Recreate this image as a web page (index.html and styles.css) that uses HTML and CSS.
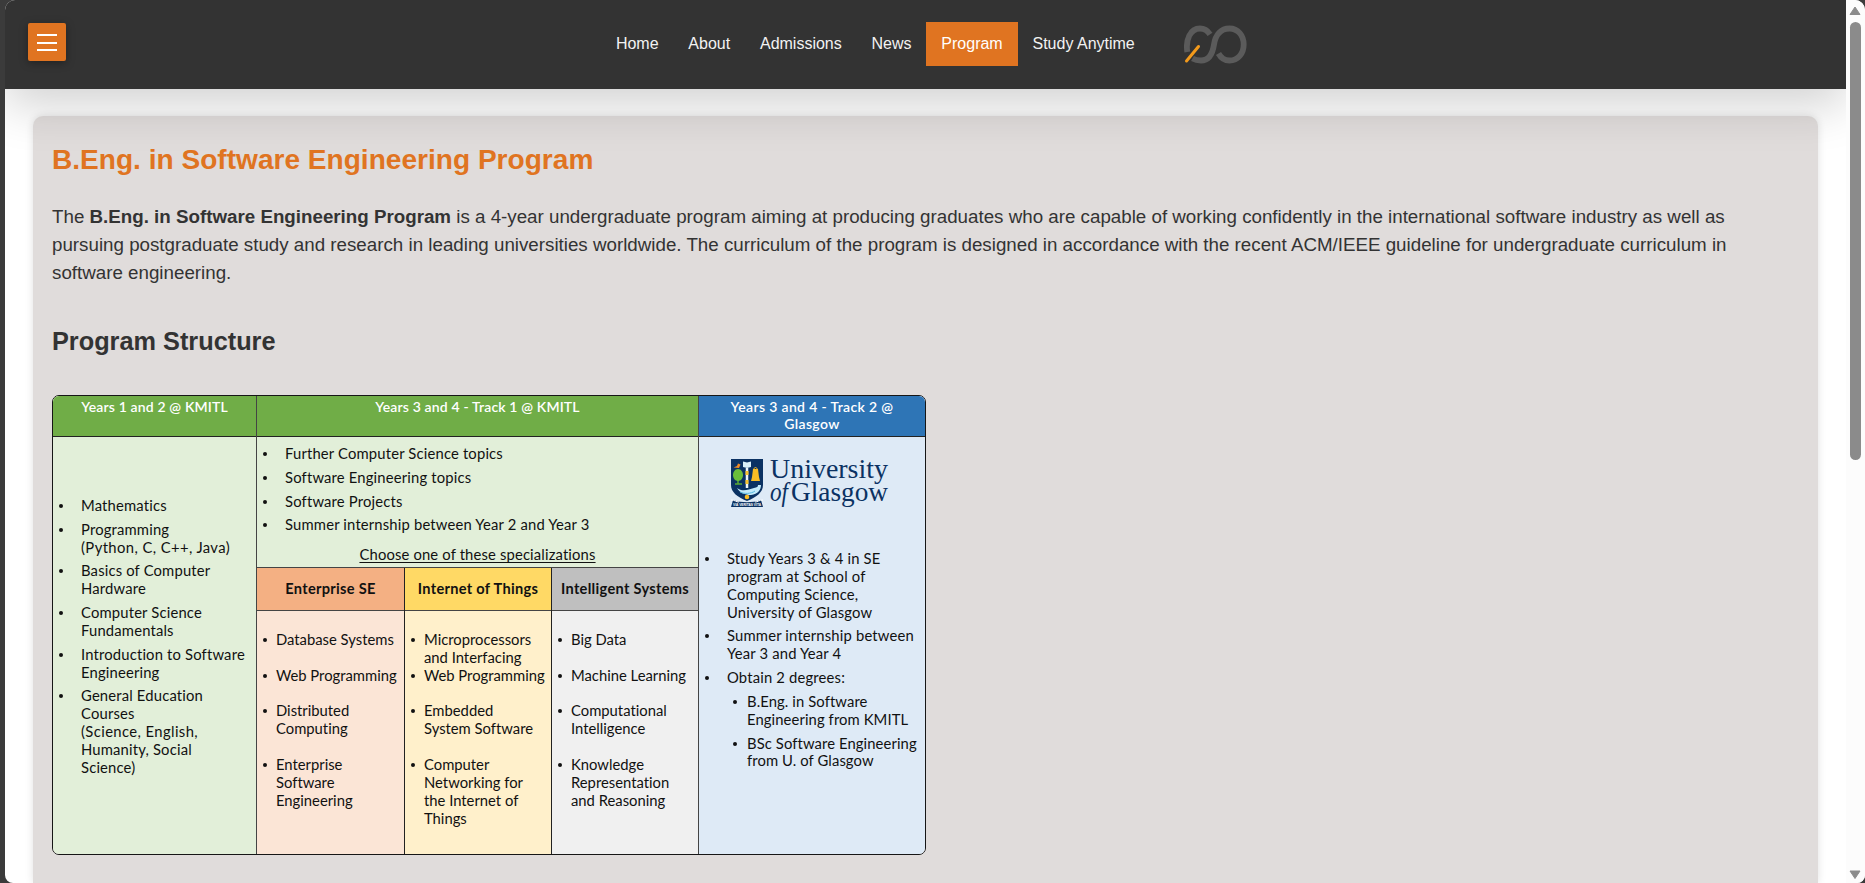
FILE: index.html
```html
<!DOCTYPE html>
<html lang="en">
<head>
<meta charset="utf-8">
<title>B.Eng. in Software Engineering Program</title>
<link rel="stylesheet" href="styles.css">
</head>
<body>
<div class="window">
  <div class="page">
    <header class="topbar">
      <button class="menu" aria-label="Menu"><span></span><span></span><span></span></button>
      <nav class="nav">
        <a>Home</a><a>About</a><a>Admissions</a><a>News</a><a class="active">Program</a><a>Study Anytime</a>
      </nav>
      <svg class="brand" viewBox="0 0 63 39" width="63" height="39" fill="none">
        <path d="M3.300 27C1.500 15 6 3.500 16 3.500c4.500 0 7.500 2 10 5.800" stroke="#5b5b5b" stroke-width="5.800"/>
        <path d="M8.500 33.500c3 1.700 5.500 2 8.500 2 7 0 11.500-6 13-16C31.500 9.500 37 3.500 45.500 3.500c8.500 0 14.200 7 14.200 16s-5.700 16-14.200 16c-5 0-8.500-2.500-11-7" stroke="#5b5b5b" stroke-width="5.800"/>
        <path d="M2.500 36 14.500 21.500" stroke="#f39a1b" stroke-width="3" stroke-linecap="round"/>
      </svg>
    </header>
    <main class="card">
      <h1>B.Eng. in Software Engineering Program</h1>
      <p class="intro">The <b>B.Eng. in Software Engineering Program</b> is a 4-year undergraduate program aiming at producing graduates who are capable of working confidently in the international software industry as well as<br>pursuing postgraduate study and research in leading universities worldwide. The curriculum of the program is designed in accordance with the recent ACM/IEEE guideline for undergraduate curriculum in<br>software engineering.</p>
      <h2>Program Structure</h2>
      <section class="structure">
        <div class="col years12">
          <div class="head green">Years 1 and 2 @ KMITL</div>
          <ul class="list wide first">
            <li>Mathematics</li>
            <li>Programming<br><span class="loose">(Python, C, C++, Java)</span></li>
            <li>Basics of Computer<br>Hardware</li>
            <li>Computer Science<br>Fundamentals</li>
            <li>Introduction to Software<br>Engineering</li>
            <li>General Education<br>Courses<br><span class="loose">(Science, English,</span><br>Humanity, Social<br>Science)</li>
          </ul>
        </div>
        <div class="col track1">
          <div class="head green">Years 3 and 4 - Track 1 @ KMITL</div>
          <div class="common">
            <ul class="list wide">
              <li>Further Computer Science topics</li>
              <li>Software Engineering topics</li>
              <li>Software Projects</li>
              <li>Summer internship between Year 2 and Year 3</li>
            </ul>
            <div class="choose">Choose one of these specializations</div>
          </div>
          <div class="specs">
            <div class="spec enterprise">
              <h3>Enterprise SE</h3>
              <ul class="list">
                <li>Database Systems</li>
                <li>Web Programming</li>
                <li>Distributed<br>Computing</li>
                <li>Enterprise<br>Software<br>Engineering</li>
              </ul>
            </div>
            <div class="spec iot">
              <h3>Internet of Things</h3>
              <ul class="list">
                <li class="tight">Microprocessors<br>and Interfacing</li>
                <li>Web Programming</li>
                <li>Embedded<br>System Software</li>
                <li>Computer<br>Networking for<br>the Internet of<br>Things</li>
              </ul>
            </div>
            <div class="spec intelligent">
              <h3>Intelligent Systems</h3>
              <ul class="list">
                <li>Big Data</li>
                <li>Machine Learning</li>
                <li>Computational<br>Intelligence</li>
                <li>Knowledge<br>Representation<br>and Reasoning</li>
              </ul>
            </div>
          </div>
        </div>
        <div class="col track2">
          <div class="head blue">Years 3 and 4 - Track 2 @<br>Glasgow</div>
          <svg class="glasgow" viewBox="0 0 160 52" width="160" height="52">
            <path d="M1 1h32v26c0 7-6 12-16 16C7 39 1 34 1 27z" fill="#0b3263"/>
            <path d="M3 42l-2 7h32l-2-7c-9 3-19 3-28 0z" fill="#0b3263"/>
            <path d="M1 42c4 0 5 2 8 2M33 42c-4 0-5 2-8 2" stroke="#fff" fill="none"/>
            <text x="3" y="48.300" class="motto" textLength="28" lengthAdjust="spacingAndGlyphs">VIA VERITAS VITA</text>
            <path d="M8 17v9M5 26h7" stroke="#5aaa35" stroke-width="1.500"/>
            <path d="M8 11c3 0 5 3 5 6s-2 6-5 6-5-3-5-6 2-6 5-6z" fill="#6abf3b"/>
            <path d="M3.500 9.500 7 8l1-2.500 2.500 1L9 10z" fill="#ef8a25"/>
            <path d="M13 3.500l4 1 4-1V9l-4 1-4-1z" fill="#d9f0fa"/>
            <path d="M17 10v20" stroke="#eef6fa" stroke-width="2.500"/>
            <path d="M17 13v4M17 22v4" stroke="#f9c32d" stroke-width="3"/>
            <path d="M23 11h5l1 8 1 4h-9l1-4z" fill="#f9bd25"/>
            <path d="M24 11c0-2 3-2 3 0" stroke="#f9bd25" fill="none"/>
            <path d="M7 30c5 4 11 2 17 0 3-1 4-1 4-3l3 0c0 5-3 9-10 10-6 0-11-2-14-7z" fill="#c3eafa"/>
            <path d="M10 34c4 2 11 2 15-1" stroke="#53b7df" fill="none"/>
            <circle cx="17" cy="39" r="2.300" fill="#f9bd25"/>
            <text x="40" y="20" class="uni" textLength="118" lengthAdjust="spacingAndGlyphs">University</text>
            <text x="40" y="42.500" class="uni of" textLength="18" lengthAdjust="spacingAndGlyphs">of</text>
            <text x="61" y="42.500" class="uni" textLength="97" lengthAdjust="spacingAndGlyphs">Glasgow</text>
          </svg>
          <ul class="list wide">
            <li>Study Years 3 &amp; 4 in SE<br>program at School of<br>Computing Science,<br>University of Glasgow</li>
            <li>Summer internship between<br>Year 3 and Year 4</li>
            <li>Obtain 2 degrees:
              <ul class="list nested">
                <li>B.Eng. in Software<br>Engineering from KMITL</li>
                <li>BSc Software Engineering<br>from U. of Glasgow</li>
              </ul>
            </li>
          </ul>
        </div>
      </section>
    </main>
  </div>
  <aside class="scrollbar">
    <svg width="12" height="10" viewBox="0 0 12 10"><path d="M6 1 11 8.500H1z" fill="#8b8b8b" stroke="#8b8b8b" stroke-linejoin="round"/></svg>
    <div class="thumb"></div>
    <svg class="down" width="12" height="10" viewBox="0 0 12 10"><path d="M6 8.500 11 1H1z" fill="#8b8b8b" stroke="#8b8b8b" stroke-linejoin="round"/></svg>
  </aside>
</div>
</body>
</html>
```

FILE: styles.css
```css
* { box-sizing: border-box; }
body {
  margin: 0;
  height: 883px;
  overflow: hidden;
  background: #3b3b3b;
  font-family: "Liberation Sans", Arial, sans-serif;
  color: #333;
}
.window {
  display: flex;
  height: 883px;
  margin-left: 5px;
  border-radius: 10px 10px 8px 8px;
  overflow: hidden;
  background: #fff;
}
.page { flex: 1; display: flex; flex-direction: column; overflow: hidden; }
.topbar {
  position: relative;
  z-index: 2;
  flex: none;
  height: 89px;
  display: flex;
  align-items: flex-start;
  background: #333;
  box-shadow: 0 16px 48px rgba(0, 0, 0, .18);
}
.menu {
  width: 38px;
  height: 38px;
  margin: 23px 0 0 23px;
  padding: 11px 9px 10px;
  border: 0;
  border-radius: 2px;
  background: #e07421;
  box-shadow: 0 2px 8px rgba(0, 0, 0, .35);
  display: flex;
  flex-direction: column;
  justify-content: space-between;
}
.menu span { height: 2px; background: #fff; }
.nav { display: flex; margin: 22px 0 0 535px; }
.nav a {
  padding: 0 14.9px;
  font-size: 16px;
  line-height: 43px;
  height: 44px;
  color: #f2f2f2;
  white-space: nowrap;
}
.nav .active { background: #e07421; color: #fff; }
.brand { margin: 25px 0 0 34px; }
.card {
  flex: 1 0 auto;
  margin: 27px 28px 0;
  padding: 28px 19px 0;
  border-radius: 10px 10px 0 0;
  background: #e0dcdb;
  box-shadow: 0 0 8px rgba(0, 0, 0, .12);
}
h1 { margin: 0; font-size: 28.08px; line-height: 31px; color: #e07421; }
.intro { margin: 28px 0 0; font-size: 18.76px; line-height: 28.1px; white-space: nowrap; }
h2 { margin: 38.7px 0 0; font-size: 25.3px; line-height: 30px; }
.structure {
  display: grid;
  grid-template-columns: 204px 442px 226px;
  width: 874px;
  height: 460px;
  margin-top: 39px;
  border: 1px solid #161616;
  border-radius: 7px;
  overflow: hidden;
  font-family: Lato, "Trebuchet MS", sans-serif;
  font-size: 14.8px;
  font-variant-ligatures: none;
  line-height: 17.87px;
  letter-spacing: .15px;
  color: #111;
  white-space: nowrap;
}
.col { display: flex; flex-direction: column; }
.years12 { background: #e2efd9; border-right: 1px solid #444; }
.track1 { background: #e2efd9; border-right: 1px solid #444; }
.track2 { background: #deeaf6; }
.head {
  flex: none;
  height: 41px;
  padding-top: 2px;
  border-bottom: 1px solid #222;
  text-align: center;
  font-weight: 600;
  font-size: 14px;
  line-height: 17px;
  color: #fff;
}
.green { background: #70ad47; }
.blue { background: #2e75b6; letter-spacing: .35px; }
.list { list-style: none; margin: 0; padding: 0; }
.list li { position: relative; padding-left: 19px; margin-bottom: 17.87px; }
.list li::before {
  content: "";
  position: absolute;
  left: 6px;
  top: 7px;
  width: 4px;
  height: 4px;
  border-radius: 50%;
  background: #111;
}
.list .tight { margin-bottom: 0; }
.wide > li, .nested > li { padding-left: 28px; margin-bottom: 5.9px; }
.first { margin-top: 60px; }
.loose { letter-spacing: .4px; }
.common { height: 131px; padding-top: 8px; border-bottom: 1px solid #444; }
.choose {
  margin-top: 12px;
  text-align: center;
  text-decoration: underline;
  text-underline-offset: 2px;
}
.specs { flex: 1; display: grid; grid-template-columns: 147px 147px 147px; }
.spec { letter-spacing: 0; }
.spec + .spec { border-left: 1px solid #222; }
.spec h3 {
  height: 43px;
  margin: 0 0 20px;
  border-bottom: 1px solid #444;
  text-align: center;
  font-size: 14.6px;
  letter-spacing: .3px;
  line-height: 42px;
}
.enterprise { background: #fbe5d6; }
.enterprise h3 { background: #f4b083; }
.iot { background: #fff0cb; }
.iot h3 { background: #ffd965; }
.intelligent { background: #f0f0f0; }
.intelligent h3 { background: #bfbfbf; }
.glasgow { flex: none; margin: 21px 0 40px 31px; }
.uni { font-family: "Liberation Serif", serif; font-size: 28px; letter-spacing: 0; fill: #0b3263; }
.of { font-style: italic; }
.motto { font-family: "Liberation Sans", sans-serif; font-size: 4px; font-weight: bold; letter-spacing: 0; fill: #fff; }
.wide > li { letter-spacing: .17px; }
.nested { margin-top: 6px; }
.nested > li { padding-left: 20px; letter-spacing: .1px; }
.scrollbar {
  flex: none;
  width: 19px;
  padding: 6px 0 3px 3px;
  display: flex;
  flex-direction: column;
  background: #fcfcfc;
}
.thumb { width: 11px; height: 438px; margin: 6px 0 0 1px; border-radius: 6px; background: #8b8b8b; }
.down { margin-top: auto; }
```
